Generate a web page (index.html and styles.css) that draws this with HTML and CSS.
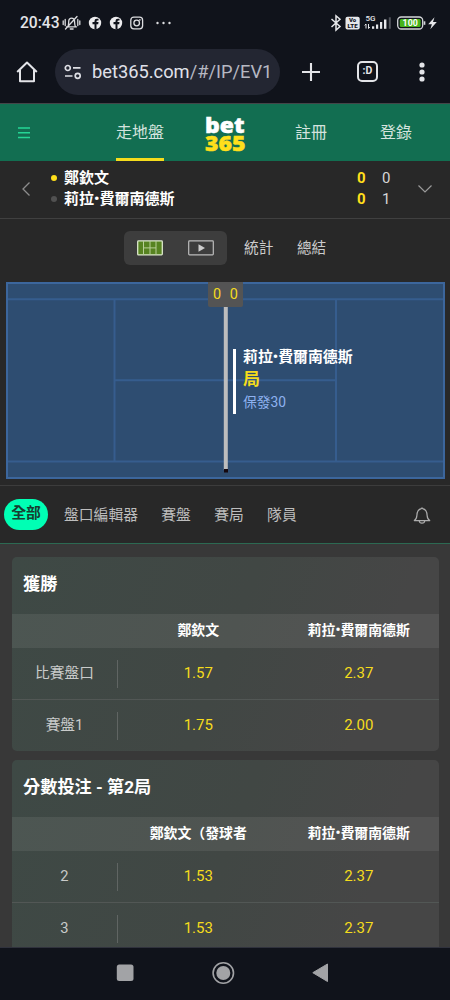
FILE: index.html
```html
<!DOCTYPE html>
<html lang="zh-Hant">
<head>
<meta charset="utf-8">
<title>bet365</title>
<link rel="stylesheet" href="styles.css">
</head>
<body>
<div class="phone">
  <div class="status">
    <span class="clock">20:43</span>
    <svg class="status-left" width="120" height="20" viewBox="0 0 120 20">
      <g fill="none" stroke="#dcdde0" stroke-width="1.3" stroke-linecap="round">
        <path d="M4.500 13.800h10M6 13.200c.9-2 .5-4 .9-6 .6-2.900 4.900-2.900 5.500 0 .4 2 0 4 .9 6M3.500 16L15 3.500M1.200 8v3.500M3.200 6.500v6M17.800 8v3.500M15.800 6.500v6M8.300 16h2.800"/>
      </g>
      <circle cx="33" cy="10" r="6.200" fill="#ececee"/>
      <path d="M32.500 16.300v-5h-2V9h2V8q0-2.300 2.300-2.300h1.700v1.900h-1.100q-.9 0-.9.9V9h2l-.3 2.300h-1.700v5z" fill="#10131b"/>
      <circle cx="54" cy="10" r="6.200" fill="#ececee"/>
      <path d="M53.500 16.300v-5h-2V9h2V8q0-2.300 2.300-2.300h1.700v1.900h-1.100q-.9 0-.9.9V9h2l-.3 2.300h-1.700v5z" fill="#10131b"/>
      <rect x="68.800" y="4.200" width="11.800" height="11.600" rx="3" fill="none" stroke="#dcdde0" stroke-width="1.300"/>
      <circle cx="74.700" cy="10" r="2.800" fill="none" stroke="#dcdde0" stroke-width="1.300"/>
      <circle cx="77.900" cy="6.900" r=".8" fill="#dcdde0"/>
      <g fill="#dcdde0"><circle cx="95.500" cy="10" r="1.200"/><circle cx="101.500" cy="10" r="1.200"/><circle cx="107.500" cy="10" r="1.200"/></g>
    </svg>
    <svg class="status-right" width="114" height="20" viewBox="0 0 114 20">
      <path d="M1.500 6l8.500 7.500-4 3.500V2.800L10 6.300 1.500 14" fill="none" stroke="#e6e7ea" stroke-width="1.500"/>
      <rect x="15.500" y="3.800" width="14.200" height="12.800" rx="2" fill="#e6e7ea"/>
      <text x="22.600" y="9.300" class="volte" text-anchor="middle">Vo</text>
      <text x="22.600" y="15.200" class="volte" text-anchor="middle" textLength="10" lengthAdjust="spacingAndGlyphs">LTE</text>
      <text x="35.500" y="8" class="five-g">5G</text>
      <path d="M36 15.500v-4.500l-1.400 1.400M38.500 11v4.500l1.400-1.400" fill="none" stroke="#e6e7ea" stroke-width="1"/>
      <g fill="#e6e7ea"><rect x="42" y="13.300" width="2.200" height="2.500"/><rect x="46" y="11.500" width="2.200" height="4.300"/><rect x="50" y="9" width="2.200" height="6.800"/><rect x="54" y="6.500" width="2.400" height="9.300"/></g>
      <rect x="58.800" y="4.300" width="2" height="11.500" fill="#50535a"/>
      <rect x="67.700" y="4" width="25" height="12" rx="3.500" fill="none" stroke="#d4d6d9" stroke-width="1.300"/>
      <rect x="69.800" y="6" width="20.800" height="8" rx="1.500" fill="#45b31b"/>
      <path d="M94.500 8.300v3.500" stroke="#d4d6d9" stroke-width="1.700"/>
      <text x="80.200" y="13" class="charge" text-anchor="middle">100</text>
      <path d="M104.500 4.200l-6.300 7h3.700l-1.600 5 6.500-7.200h-3.800z" fill="#e6e7ea"/>
    </svg>
  </div>

  <div class="browser">
    <svg class="home" width="24" height="24" viewBox="0 0 24 24"><path d="M2.200 12L12 2.500 21.800 12M5 10v11.200h14V10" fill="none" stroke="#e3e4e8" stroke-width="2" stroke-linejoin="round"/></svg>
    <div class="address">
      <svg width="18" height="16" viewBox="0 0 18 16" fill="none" stroke="#dedfe5" stroke-width="1.700"><circle cx="3.800" cy="4" r="2.500"/><path d="M9 3.800h7.500M1 12h7.500"/><circle cx="13.700" cy="11.800" r="2.500"/></svg>
      <span class="url">bet365.com<span class="path">/#/IP/EV1</span></span>
    </div>
    <svg width="20" height="20" viewBox="0 0 20 20"><path d="M10 1v18M1 10h18" stroke="#e3e4e8" stroke-width="2.100"/></svg>
    <div class="tab-count">:D</div>
    <svg class="kebab" width="8" height="22" viewBox="0 0 8 22" fill="#e3e4e8"><circle cx="4" cy="4" r="2.600"/><circle cx="4" cy="11" r="2.600"/><circle cx="4" cy="18" r="2.600"/></svg>
  </div>

  <header class="site">
    <svg class="burger" width="12" height="12" viewBox="0 0 12 12"><path d="M0 1h12M0 5.800h12M0 10.500h12" stroke="#25d695" stroke-width="1.500"/></svg>
    <a class="live">走地盤</a>
    <svg class="logo" width="42" height="56" viewBox="0 0 42 56">
      <text x="0" y="27.500" fill="#fff" stroke="#fff" textLength="39.500" lengthAdjust="spacingAndGlyphs">bet</text>
      <text x="0" y="46" fill="#ffdf1b" stroke="#ffdf1b" textLength="40.500" lengthAdjust="spacingAndGlyphs">365</text>
    </svg>
    <a class="join">註冊</a>
    <a class="login">登錄</a>
  </header>

  <section class="score">
    <svg width="10" height="16" viewBox="0 0 10 16"><path d="M8.500 1.500L2 8l6.500 6.500" fill="none" stroke="#8d8d8d" stroke-width="1.300"/></svg>
    <div class="players">
      <div class="player"><i class="dot serving"></i><b>鄭欽文</b><span class="set">0</span><span class="game">0</span></div>
      <div class="player"><i class="dot"></i><b>莉拉•費爾南德斯</b><span class="set">0</span><span class="game">1</span></div>
    </div>
    <svg width="16" height="10" viewBox="0 0 16 10"><path d="M1.500 1.500L8 8l6.500-6.500" fill="none" stroke="#9a9a9a" stroke-width="1.200"/></svg>
  </section>

  <nav class="views">
    <div class="toggle">
      <svg width="26" height="16" viewBox="0 0 26 16"><rect x=".7" y=".9" width="24.600" height="14" rx=".8" fill="#578321" stroke="#dce8cc" stroke-width="1.300"/><path d="M6.500 1v13.500M19 1v13.500M13 1v13.500M6.500 7.900H19" stroke="#b8cf98" stroke-width="1"/></svg>
      <svg width="26" height="16" viewBox="0 0 26 16"><rect x=".7" y=".9" width="24.600" height="14" rx=".8" fill="none" stroke="#bcbcbc" stroke-width="1.200"/><path d="M10.500 4.200v7.600l6.500-3.800z" fill="#cdcdcd"/></svg>
    </div>
    <a>統計</a>
    <a>總結</a>
  </nav>

  <section class="court">
    <svg class="lines" width="439" height="198" viewBox="0 0 439 198">
      <rect x="1" y="1" width="437" height="195" fill="#2e4d71" stroke="#3c669c" stroke-width="2"/>
      <path d="M2 17.200h435M2 179.500h435M108.500 17v162M330 17v162M109 98.300h221" fill="none" stroke="#365d8e" stroke-width="2"/>
      <path d="M219.800 20v168" stroke="#bdbdbd" stroke-width="4"/>
      <rect x="218" y="187" width="4" height="3.500" fill="#15080f"/>
    </svg>
    <div class="points"><span>0</span><span>0</span></div>
    <div class="event">
      <b class="who">莉拉•費爾南德斯</b>
      <b class="what">局</b>
      <span class="how">保發30</span>
    </div>
  </section>

  <nav class="markets">
    <a class="active">全部</a>
    <a>盤口編輯器</a>
    <a>賽盤</a>
    <a>賽局</a>
    <a>隊員</a>
    <svg class="bell" width="18" height="18" viewBox="0 0 18 18" fill="none" stroke="#adadad" stroke-width="1.200" stroke-linejoin="round"><path d="M1.300 14.600c2.100-1.200 2.400-2.700 2.600-5.200.2-3.700 1.600-6 3.900-6.500a1.300 1.300 0 0 1 2.400 0c2.300.5 3.700 2.800 3.900 6.500.2 2.500.5 4 2.600 5.200zM6.200 14.800c.3 3.200 5.300 3.200 5.600 0"/></svg>
  </nav>

  <main class="content">
    <section class="card">
      <h2>獲勝</h2>
      <div class="row head"><span></span><b>鄭欽文</b><b>莉拉•費爾南德斯</b></div>
      <div class="row"><span class="label">比賽盤口</span><span class="odds">1.57</span><span class="odds">2.37</span></div>
      <div class="row"><span class="label">賽盤1</span><span class="odds">1.75</span><span class="odds">2.00</span></div>
    </section>
    <section class="card">
      <h2>分數投注 - 第2局</h2>
      <div class="row head"><span></span><b>鄭欽文（發球者</b><b>莉拉•費爾南德斯</b></div>
      <div class="row"><span class="label">2</span><span class="odds">1.53</span><span class="odds">2.37</span></div>
      <div class="row"><span class="label">3</span><span class="odds">1.53</span><span class="odds">2.37</span></div>
    </section>
  </main>

  <footer class="system">
    <svg width="18" height="18" viewBox="0 0 18 18"><rect x=".8" y=".5" width="16.700" height="16.500" rx="2.500" fill="#a2a3a6"/></svg>
    <svg width="24" height="24" viewBox="0 0 24 24"><circle cx="12.300" cy="12" r="10.200" fill="none" stroke="#a2a3a6" stroke-width="1.600"/><circle cx="12.300" cy="12" r="7" fill="#a2a3a6"/></svg>
    <svg width="18" height="20" viewBox="0 0 18 20"><path d="M15.500 1v17.500L.8 9.700z" fill="#a2a3a6" stroke="#a2a3a6" stroke-linejoin="round"/></svg>
  </footer>
</div>
</body>
</html>
```
FILE: styles.css
```css
* { box-sizing: border-box; }
body {
  margin: 0;
  background: #10131b;
  font-family: Roboto, "Noto Sans CJK TC", sans-serif;
}
svg { display: block; flex: none; overflow: visible; }
.phone {
  width: 450px;
  height: 1000px;
  overflow: hidden;
  display: flex;
  flex-direction: column;
}
.phone > * { flex: none; }

.status {
  height: 46px;
  padding: 0 20px;
  display: flex;
  align-items: center;
  color: #e3e4e8;
}
.clock { width: 42px; font-size: 15.6px; font-weight: 500; line-height: 20px; white-space: nowrap; }
.status-right { margin-left: auto; margin-right: -14px; }
.volte { font-size: 6px; font-weight: 900; fill: #10131b; }
.five-g { font-size: 8px; font-weight: 500; fill: #e6e7ea; }
.charge { font-size: 8.8px; font-weight: 700; fill: #fff; }

.browser {
  height: 57px;
  padding: 2px 24px 8px 15px;
  display: flex;
  align-items: center;
}
.address {
  width: 225px;
  height: 46px;
  margin: 0 21px 0 16px;
  padding-left: 9px;
  border-radius: 23px;
  background: #232632;
  display: flex;
  align-items: center;
  gap: 10px;
}
.url { font-size: 18.3px; line-height: 24px; color: #e0e1ea; white-space: nowrap; }
.path { color: #b6b8c2; }
.tab-count {
  width: 21px;
  height: 21px;
  margin-left: 36px;
  border: 2px solid #e3e4e8;
  border-radius: 5px;
  color: #e3e4e8;
  font-size: 10.5px;
  font-weight: 700;
  line-height: 16px;
  text-align: center;
}
.kebab { margin-left: auto; }

.site {
  height: 58px;
  border-top: 1px solid #434649;
  background: #126e51;
  display: flex;
  align-items: center;
  padding-left: 18px;
  color: #d4e3de;
  font-size: 16px;
}
.site a { line-height: 57px; height: 57px; }
.site .live { margin-left: 86px; border-bottom: 3px solid #f5dc1c; }
.logo { margin-left: 41px; font-family: "Open Sans", sans-serif; font-size: 21px; font-weight: 800; stroke-width: .5px; }
.join { margin-left: 48px; }
.login { margin-left: 53px; }

.score {
  height: 58px;
  background: #282828;
  border-bottom: 1px solid #404040;
  display: flex;
  align-items: center;
  padding: 0 17px 2px 21px;
}
.players { width: 340px; margin: 0 26px 0 20px; }
.player { display: flex; align-items: center; height: 20.5px; color: #fff; font-size: 15px; line-height: 20px; }
.player b { margin-left: 7px; flex: 1; }
.dot { width: 6px; height: 6px; border-radius: 50%; background: #515151; }
.serving { background: #ffdf1b; }
.set { width: 25px; color: #ffdf1b; font-weight: 700; }
.game { width: 9px; color: #d6d6d6; }

.views {
  height: 63px;
  background: #282828;
  display: flex;
  align-items: center;
  padding: 0 0 5px 124px;
  color: #cbcbcb;
  font-size: 14.7px;
}
.toggle {
  width: 103px;
  height: 34px;
  border-radius: 6px;
  background: #3d3d3d;
  display: flex;
  align-items: center;
  justify-content: space-between;
  padding: 0 13px;
  margin-right: 17px;
}
.views a { margin-right: 23.5px; padding-bottom: 3px; }

.court {
  position: relative;
  height: 204px;
  padding-left: 6px;
  background: #282828;
  border-bottom: 1px solid #3c3c3c;
}
.points {
  position: absolute;
  left: 208px;
  top: 0;
  width: 35px;
  height: 25px;
  padding: 0 5px;
  border-radius: 0 0 2px 2px;
  background: #545454;
  color: #f3db20;
  font-size: 14.5px;
  line-height: 25px;
  display: flex;
  justify-content: space-between;
}
.event {
  position: absolute;
  left: 233px;
  top: 67px;
  height: 65px;
  padding-left: 7px;
  border-left: 3px solid #fff;
  display: flex;
  flex-direction: column;
  white-space: nowrap;
}
.who { color: #fff; font-size: 14.9px; line-height: 17px; }
.what { color: #f5dc1c; font-size: 17px; line-height: 26px; }
.how { color: #8fb2f0; font-size: 13.8px; line-height: 20px; }

.markets {
  height: 58px;
  background: #282828;
  border-bottom: 1px solid #2c6952;
  display: flex;
  align-items: center;
  padding: 0 19px 0 4px;
  color: #bdbdbd;
  font-size: 14.8px;
}
.markets a { margin-right: 23.3px; padding-bottom: 3px; }
.markets .active {
  width: 44px;
  height: 31px;
  margin-right: 16px;
  padding: 0;
  border-radius: 16px;
  background: #00ffb4;
  color: #173d30;
  font-weight: 700;
  line-height: 28px;
  text-align: center;
}
.bell { margin-left: auto; }

.content {
  height: 403px;
  overflow: hidden;
  background: #383838;
  padding: 13px 11px 0 12px;
}
.card {
  height: 194px;
  margin-bottom: 9px;
  border-radius: 5px;
  overflow: hidden;
  background: linear-gradient(110deg, #3e4945 0%, #414744 50%, #464646 82%);
}
.card h2 {
  margin: 0;
  height: 57px;
  padding: 0 0 2px 11px;
  color: #fff;
  font-size: 17.2px;
  line-height: 55px;
}
.row {
  height: 52px;
  display: grid;
  grid-template-columns: 106px 1fr 1fr;
  align-items: center;
  text-align: center;
  border-bottom: 1px solid #525755;
}
.row:last-child { border-bottom: 0; height: 51px; }
.row.head {
  height: 34px;
  border: 0;
  background: rgba(255, 255, 255, .075);
  color: #fff;
  font-size: 13.9px;
  line-height: 30px;
}
.row.head b { padding-bottom: 2px; }
.label {
  height: 28px;
  border-right: 1px solid #606563;
  color: #c9cbca;
  font-size: 14.7px;
  line-height: 26px;
}
.odds { height: 28px; color: #f5dc1c; font-size: 15px; line-height: 26px; }

.system {
  height: 53px;
  border-top: 1px solid #30323d;
  display: flex;
  align-items: center;
  padding: 0 0 2px 116px;
  background: #10131b;
  gap: 77px;
}
```
